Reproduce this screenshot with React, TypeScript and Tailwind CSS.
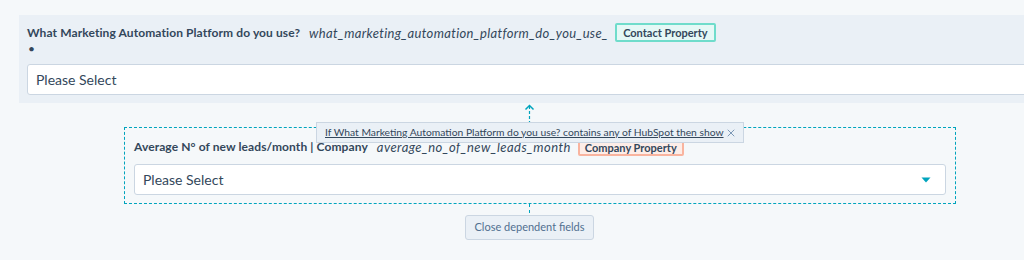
import { X } from 'lucide-react'

const font = { fontFamily: 'Lato, "Noto Sans", sans-serif' }

function SelectBox({ caret = false }: { caret?: boolean }) {
  return (
    <div className="flex h-[31px] items-center justify-between rounded-[3px] border border-[#cbd6e2] bg-white pl-2 pr-[14px]">
      <span className="text-[14px] text-[#33475b]">Please Select</span>
      {caret && (
        <svg width="10" height="6" viewBox="0 0 10 6">
          <path d="M0.5 0.5 H9.5 L5 5.5 Z" fill="#00a4bd" />
        </svg>
      )}
    </div>
  )
}

export default function App() {
  return (
    <div className="h-[260px] w-[1024px] overflow-hidden bg-[#f5f8fa] pt-[15px] text-[#33475b]" style={font}>
      {/* Parent field */}
      <div className="ml-[19px] w-[1021px] bg-[#eaf0f6] px-2 pb-[8px] pt-[8px]">
        <div className="flex items-center text-[12px] leading-[18px]">
          <span className="mr-[9px] font-bold tracking-[0.1px]">What Marketing Automation Platform do you use?</span>
          <span className="mr-[7px] text-[13px] italic tracking-[0.35px]">what_marketing_automation_platform_do_you_use_</span>
          <span className="rounded-[2px] border-2 border-[#6fdccb] bg-[#e5f8f6] px-[6px] text-[11px] font-bold leading-[15px]">
            Contact Property
          </span>
        </div>
        <div className="h-[22px] pl-[1px] text-[12px] leading-[14px]">•</div>
        <SelectBox />
      </div>

      {/* Connector + rule tooltip */}
      <div className="relative h-[24px]">
        <svg className="absolute left-[524px] top-0" width="11" height="24" viewBox="0 0 11 24">
          <path d="M1.5 6.5 L5.5 2.5 L9.5 6.5" fill="none" stroke="#00a4bd" strokeWidth="1.5" />
          <line x1="5.5" y1="3" x2="5.5" y2="24" stroke="#00a4bd" strokeWidth="1.2" strokeDasharray="3 2" />
        </svg>
        <div className="absolute left-[316px] top-[19px] z-10 flex h-[21px] w-[428px] items-center justify-between border border-[#cbd6e2] bg-[#eaf0f6] pl-[8px] pr-[6px] text-[10.3px] text-[#33475b]">
          <span className="whitespace-nowrap underline">
            If What Marketing Automation Platform do you use? contains any of HubSpot then show
          </span>
          <X size={12} strokeWidth={2} className="text-[#7c98b6]" />
        </div>
      </div>

      {/* Dependent field */}
      <div className="ml-[124px] w-[832px] border border-dashed border-[#00a4bd] px-[9px] pb-[8px] pt-[10px]">
        <div className="flex items-center text-[12px] leading-[18px]">
          <span className="mr-[9px] font-bold tracking-[0.1px]">Average N° of new leads/month | Company</span>
          <span className="mr-[7px] text-[13px] italic tracking-[0.45px]">average_no_of_new_leads_month</span>
          <span className="rounded-[2px] border-2 border-[#f9b49f] bg-[#fdede8] px-[5px] text-[11px] font-bold leading-[13px]">
            Company Property
          </span>
        </div>
        <div className="mt-[8px]">
          <SelectBox caret />
        </div>
      </div>

      <div className="ml-[529px] h-[9px] w-0 border-l border-dashed border-[#00a4bd]" />

      <button className="ml-[465px] h-[25px] w-[129px] rounded-[3px] border border-[#cbd6e2] bg-[#eaf0f6] text-[11px] text-[#516f90]">
        Close dependent fields
      </button>
    </div>
  )
}
